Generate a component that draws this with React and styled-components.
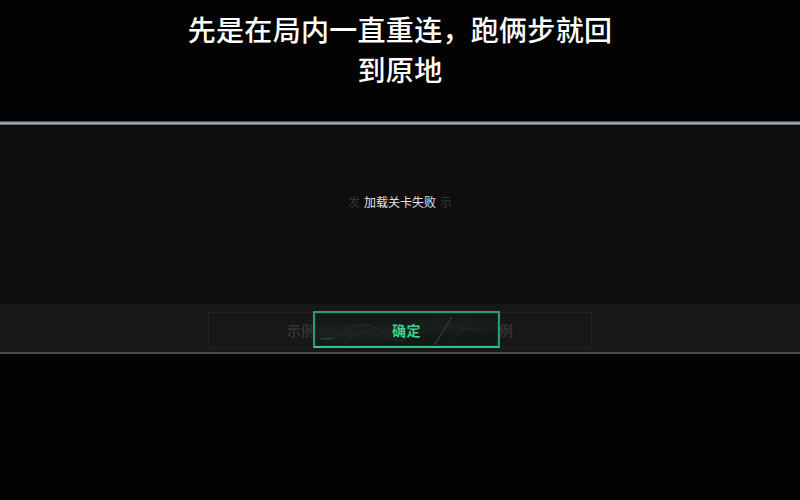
import styled, { createGlobalStyle } from "styled-components";

const GlobalStyle = createGlobalStyle`
  html, body {
    margin: 0;
    padding: 0;
    background: #030303;
    width: 800px;
    height: 500px;
    overflow: hidden;
    font-family: "Noto Sans CJK SC", "Noto Sans", sans-serif;
  }
`;

const Page = styled.div`
  display: flex;
  flex-direction: column;
  width: 800px;
  height: 500px;
  background: #030303;
`;

const Subtitle = styled.div`
  padding-top: 9px;
  height: 121px;
  box-sizing: border-box;
  text-align: center;
  color: #ffffff;
  font-size: 28px;
  font-weight: 500;
  line-height: 40px;
  letter-spacing: 0.3px;
`;

const Panel = styled.div`
  display: flex;
  flex-direction: column;
  background: #0e0e0e;
  border-bottom: 2px solid #4c4c4c;
`;

const TopEdge = styled.div`
  height: 4px;
  background: linear-gradient(
    to bottom,
    #1c252b 0%,
    #8f999e 35%,
    #b4bcc0 55%,
    #4a5358 100%
  );
`;

const Body = styled.div`
  height: 179px;
  display: flex;
  justify-content: center;
  align-items: flex-start;
  padding-top: 68px;
  box-sizing: border-box;
`;

const MessageRow = styled.div`
  display: flex;
  align-items: center;
  gap: 4px;
  height: 18px;
`;

const GhostSide = styled.span`
  font-size: 12px;
  line-height: 18px;
  color: #353535;
  filter: blur(0.6px);
`;

const Message = styled.span`
  font-size: 12px;
  line-height: 18px;
  color: #e2e2e2;
`;

const Footer = styled.div`
  height: 48px;
  background: #171717;
  display: flex;
  justify-content: center;
  align-items: flex-start;
  padding-top: 8px;
  box-sizing: border-box;
`;

const GhostBar = styled.div`
  position: relative;
  width: 384px;
  height: 36px;
  border: 1px solid #232323;
  box-sizing: border-box;
  display: flex;
  justify-content: space-between;
  align-items: center;
  padding: 0 78px;
`;

const GhostLabel = styled.span`
  font-size: 14px;
  font-weight: 700;
  color: #333333;
  filter: blur(0.5px);
`;

const ConfirmButton = styled.button`
  position: absolute;
  left: 104px;
  top: -2px;
  width: 187px;
  height: 37px;
  padding: 0;
  border: 2px solid #2a9a70;
  border-bottom-color: #3cc08a;
  background:
    radial-gradient(ellipse at 20% 60%, rgba(120, 140, 135, 0.1), transparent 45%),
    radial-gradient(ellipse at 75% 40%, rgba(120, 140, 135, 0.08), transparent 40%),
    #121816;
  color: #3fd08e;
  font-family: "Noto Sans CJK SC", sans-serif;
  font-size: 14px;
  font-weight: 700;
  letter-spacing: 0.5px;
  cursor: pointer;
  overflow: hidden;
  box-shadow: inset 0 0 0 1px rgba(20, 60, 45, 0.6);
`;

const Swirl = styled.svg`
  position: absolute;
  inset: 0;
  width: 100%;
  height: 100%;
  pointer-events: none;
`;

const Label = styled.span`
  position: relative;
`;

export default function App() {
  return (
    <>
      <GlobalStyle />
      <Page>
        <Subtitle>
          先是在局内一直重连，跑俩步就回
          <br />
          到原地
        </Subtitle>
        <Panel>
          <TopEdge />
          <Body>
            <MessageRow>
              <GhostSide>发</GhostSide>
              <Message>加载关卡失败</Message>
              <GhostSide>示</GhostSide>
            </MessageRow>
          </Body>
          <Footer>
            <GhostBar>
              <GhostLabel>示例</GhostLabel>
              <GhostLabel>示例</GhostLabel>
              <ConfirmButton>
                <Swirl viewBox="0 0 187 37" preserveAspectRatio="none">
                  <path d="M20 30 C35 10, 55 8, 70 22 S95 34, 100 12" stroke="#29312e" strokeWidth="1" fill="none" />
                  <path d="M30 34 C45 18, 60 20, 75 30" stroke="#242b28" strokeWidth="1" fill="none" />
                  <path d="M122 36 L140 4" stroke="#2e3633" strokeWidth="1.5" fill="none" />
                  <path d="M140 30 C150 14, 165 14, 175 24" stroke="#262e2b" strokeWidth="1" fill="none" />
                  <rect x="6" y="28" width="12" height="1.5" fill="#264a3d" />
                </Swirl>
                <Label>确定</Label>
              </ConfirmButton>
            </GhostBar>
          </Footer>
        </Panel>
      </Page>
    </>
  );
}
